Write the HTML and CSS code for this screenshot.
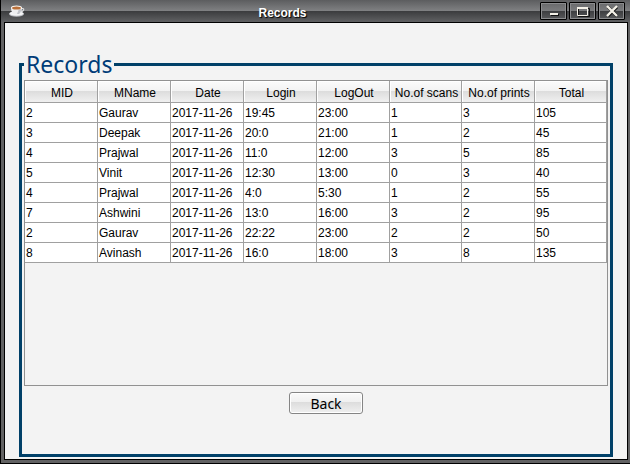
FILE: index.html
```html
<!DOCTYPE html>
<html lang="en">
<head>
<meta charset="utf-8">
<title>Records</title>
<link rel="stylesheet" href="styles.css">
</head>
<body>
<div class="window">
  <header class="titlebar">
    <svg class="app-icon" width="16" height="12" viewBox="0 0 16 12" aria-hidden="true">
      <ellipse cx="7.5" cy="9" rx="7.500" ry="2.800" fill="#b9bbc0"/>
      <ellipse cx="7.5" cy="8.500" rx="7" ry="2.200" fill="#f4f4f6"/>
      <path d="M12 3.5h1.6q1.4 0 1 1.5-.5 1.6-3.4 2" fill="none" stroke="#dcdde0" stroke-width="1.2"/>
      <path d="M2 2.200h11q0 5-2.800 7h-5.400q-2.800-2-2.800-7z" fill="#eeeef0"/>
      <path d="M10 4h2.500q-.4 3.200-2.500 5h-2z" fill="#c0c2c8"/>
      <ellipse cx="7.500" cy="2.600" rx="5.500" ry="2.200" fill="#f7f3ee"/>
      <ellipse cx="7.500" cy="2.900" rx="4.400" ry="1.500" fill="#b9703a"/>
    </svg>
    <h1 class="title">Records</h1>
    <div class="controls">
      <button class="control" type="button" aria-label="Minimize">
        <svg width="14" height="12" viewBox="0 0 14 12"><path d="M4 9h8v2H4z" fill="#111"/><path d="M3 8h8v2H3z" fill="#f4f1e8"/></svg>
      </button>
      <button class="control" type="button" aria-label="Maximize">
        <svg width="14" height="12" viewBox="0 0 14 12"><path d="M2.500 3.500h11v8h-11z" fill="none" stroke="#111"/><path d="M1.500 2.500h10v8h-10z" fill="none" stroke="#f4f1e8"/><path d="M1 2h11v2H1z" fill="#f4f1e8"/></svg>
      </button>
      <button class="control" type="button" aria-label="Close">
        <svg width="14" height="12" viewBox="0 0 14 12"><path d="M3 2l9 9M12 2l-9 9" stroke="#111" stroke-width="3"/><path d="M2 1l10 10M12 1l-10 10" stroke="#f4f1e8" stroke-width="2.400"/></svg>
      </button>
    </div>
  </header>
  <main class="content">
    <fieldset class="group">
      <legend class="legend">Records</legend>
      <div class="panel">
        <div class="scroll">
          <table class="records">
            <colgroup><col class="wide" span="5"><col><col class="wide"><col></colgroup>
            <thead>
              <tr><th>MID</th><th>MName</th><th>Date</th><th>Login</th><th>LogOut</th><th>No.of scans</th><th>No.of prints</th><th>Total</th></tr>
            </thead>
            <tbody>
              <tr><td>2</td><td>Gaurav</td><td>2017-11-26</td><td>19:45</td><td>23:00</td><td>1</td><td>3</td><td>105</td></tr>
              <tr><td>3</td><td>Deepak</td><td>2017-11-26</td><td>20:0</td><td>21:00</td><td>1</td><td>2</td><td>45</td></tr>
              <tr><td>4</td><td>Prajwal</td><td>2017-11-26</td><td>11:0</td><td>12:00</td><td>3</td><td>5</td><td>85</td></tr>
              <tr><td>5</td><td>Vinit</td><td>2017-11-26</td><td>12:30</td><td>13:00</td><td>0</td><td>3</td><td>40</td></tr>
              <tr><td>4</td><td>Prajwal</td><td>2017-11-26</td><td>4:0</td><td>5:30</td><td>1</td><td>2</td><td>55</td></tr>
              <tr><td>7</td><td>Ashwini</td><td>2017-11-26</td><td>13:0</td><td>16:00</td><td>3</td><td>2</td><td>95</td></tr>
              <tr><td>2</td><td>Gaurav</td><td>2017-11-26</td><td>22:22</td><td>23:00</td><td>2</td><td>2</td><td>50</td></tr>
              <tr><td>8</td><td>Avinash</td><td>2017-11-26</td><td>16:0</td><td>18:00</td><td>3</td><td>8</td><td>135</td></tr>
            </tbody>
          </table>
        </div>
        <div class="actions">
          <button class="back" type="button">Back</button>
        </div>
      </div>
    </fieldset>
  </main>
</div>
</body>
</html>
```
FILE: styles.css
```css
* {
  box-sizing: border-box;
}

body {
  margin: 0;
  font: 12px/17px "Liberation Sans", Arial, sans-serif;
  color: #000;
}

.window {
  display: flex;
  flex-direction: column;
  min-height: 100vh;
  padding: 0 2px 3px 3px;
  border-left: 1px solid #000;
  border-bottom: 1px solid #000;
  background: #626263;
}

.titlebar {
  display: flex;
  align-items: center;
  height: 22px;
  margin: 0 -2px 0 -3px;
  padding: 0 5px 0 8px;
  background: linear-gradient(#5c5d5f, #808183 11px, #3a3b3d 11px, #606163);
}

.title {
  flex: 1;
  margin: 4px 0 0;
  font-size: 12px;
  line-height: 20px;
  text-align: center;
  color: #fff;
  text-shadow: 1px 1px 1px #000;
}

.controls {
  display: flex;
  gap: 2px;
}

.control {
  display: flex;
  align-items: center;
  justify-content: center;
  width: 27px;
  height: 18px;
  padding: 0;
  border: 1px solid #000;
  border-radius: 1px;
  background: linear-gradient(#68696b, #7b7c7e 8px, #3c3d3f 8px, #58595b);
  box-shadow: inset 0 0 0 1px #8b8c8e;
}

.content {
  display: flex;
  flex: 1;
  padding: 27px 14px 2px;
  border: 1px solid #000;
  background: #f3f3f3;
}

.group {
  display: flex;
  flex: 1;
  min-width: 0;
  margin: 0;
  padding: 2px;
  border: 3px solid #004068;
}

.legend {
  padding: 0 2px;
  font: 23px/28px "Noto Sans", Tahoma, sans-serif;
  color: #003c78;
}

.panel {
  display: flex;
  flex-direction: column;
  flex: 1;
  min-width: 0;
  height: 100%;
  padding-bottom: 38px;
}

.scroll {
  flex: 1;
  border: 1px solid #919191;
  overflow: auto;
}

.records {
  width: 100%;
  table-layout: fixed;
  border-spacing: 0;
}

.wide {
  width: 73px;
}

.records th,
.records td {
  border-right: 1px solid #a0a0a0;
  border-bottom: 1px solid #a0a0a0;
  font-weight: 400;
  white-space: nowrap;
}

.records th {
  height: 22px;
  padding: 4px 0 0 2px;
  background: linear-gradient(#fbfbfb, #f2f2f2 10px, #dcdcdc 10px, #f0f0f0);
  box-shadow: inset 1px 1px #fff;
}

.records td {
  height: 20px;
  padding: 2px 1px 0;
  background: #fff;
}

.actions {
  display: flex;
  justify-content: center;
  padding: 6px 0 0 20px;
}

.back {
  width: 74px;
  height: 22px;
  padding: 0;
  border: 1px solid #858585;
  border-radius: 3px;
  background: linear-gradient(#fafafa, #f0f0f0 9px, #dcdcdc 9px, #f0f0f0);
  box-shadow: inset 0 0 0 1px #fff;
  font: 14px/22px "Noto Sans", Tahoma, sans-serif;
  color: #000;
}
```
